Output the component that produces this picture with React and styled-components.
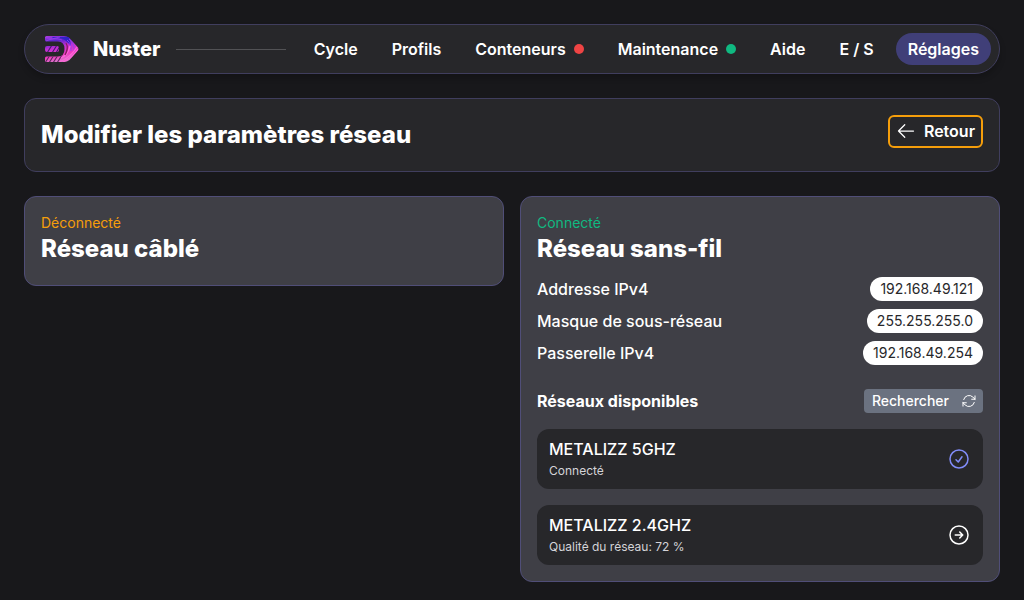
import React from "react";
import styled, { createGlobalStyle } from "styled-components";
import {
  HiOutlineArrowLeft,
  HiOutlineArrowPath,
  HiOutlineArrowRightCircle,
  HiOutlineCheckCircle,
} from "react-icons/hi2";

const GlobalStyle = createGlobalStyle`
  *, *::before, *::after { box-sizing: border-box; }
  body {
    margin: 0;
    background: #18181b;
    color: #ffffff;
    font-family: Inter, "Liberation Sans", sans-serif;
    font-size: 16px;
    line-height: 24px;
    font-optical-sizing: none;
  }
  h1, h2, h3, p, ul, dl, dd { margin: 0; padding: 0; }
  button { font: inherit; color: inherit; cursor: pointer; }
`;

const Page = styled.div`
  display: flex;
  flex-direction: column;
  gap: 24px;
  padding: 24px 24px 18px;
`;

const NavBar = styled.header`
  display: flex;
  align-items: center;
  gap: 16px;
  padding: 8px 8px 8px 20px;
  background: #27272a;
  border: 1px solid #403e5e;
  border-radius: 25px;
  box-shadow: 0 4px 6px rgba(0, 0, 0, 0.2);
`;

const Brand = styled.div`
  display: flex;
  align-items: center;
  gap: 14px;
  font-size: 20px;
  font-weight: 800;
`;

const Rule = styled.div`
  flex: 1;
  height: 1px;
  background: #525255;
`;

const NavLinks = styled.nav`
  display: flex;
  gap: 10px;
`;

const NavLink = styled.a`
  display: flex;
  align-items: center;
  gap: 8px;
  padding: 4px 12px;
  border-radius: 16px;
  background: ${(p) => (p.$active ? "#403f78" : "transparent")};
  color: #ffffff;
  font-weight: 600;
  text-decoration: none;
  white-space: nowrap;
`;

const Dot = styled.span`
  width: 10px;
  height: 10px;
  border-radius: 50%;
  background: ${(p) => p.$color};
`;

const TitleCard = styled.section`
  display: flex;
  align-items: flex-start;
  justify-content: space-between;
  padding: 16px;
  background: #27272a;
  border: 1px solid #403e5e;
  border-radius: 12px;
`;

const PageTitle = styled.h1`
  font-size: 24px;
  line-height: 40px;
  font-weight: 800;
`;

const BackButton = styled.button`
  display: flex;
  align-items: center;
  gap: 8px;
  padding: 2px 6px 3px;
  background: transparent;
  border: 2px solid #f59e0b;
  border-radius: 6px;
  font-weight: 600;
`;

const Columns = styled.main`
  display: grid;
  grid-template-columns: 1fr 1fr;
  align-items: start;
  gap: 16px;
`;

const Card = styled.section`
  padding: 16px;
  background: #3f3f46;
  border: 1px solid #504e78;
  border-radius: 12px;
`;

const Status = styled.p`
  color: ${(p) => p.$color};
  font-size: 14px;
  line-height: 20px;
`;

const CardTitle = styled.h2`
  margin-bottom: 4px;
  font-size: 24px;
  line-height: 32px;
  font-weight: 800;
`;

const Details = styled.dl`
  display: flex;
  flex-direction: column;
  gap: 8px;
  padding-top: 8px;
`;

const DetailRow = styled.div`
  display: flex;
  align-items: center;
  justify-content: space-between;
`;

const DetailLabel = styled.dt`
  font-weight: 500;
`;

const Pill = styled.dd`
  padding: 0 10px;
  background: #ffffff;
  border-radius: 12px;
  color: #27272a;
  font-size: 14px;
`;

const ListHeader = styled.div`
  display: flex;
  align-items: center;
  justify-content: space-between;
  margin-top: 24px;
`;

const ListTitle = styled.h3`
  font-size: 16px;
  font-weight: 700;
`;

const SearchButton = styled.button`
  display: flex;
  align-items: center;
  gap: 12px;
  height: 24px;
  padding: 0 6px 0 8px;
  background: #6b7280;
  border: 0;
  border-radius: 4px;
  font-size: 14px;
  font-weight: 500;
`;

const NetworkList = styled.ul`
  display: flex;
  flex-direction: column;
  gap: 16px;
  padding-top: 16px;
  list-style: none;
`;

const Network = styled.li`
  display: flex;
  align-items: center;
  justify-content: space-between;
  padding: 8px 12px;
  background: #27272a;
  border-radius: 12px;
`;

const NetworkName = styled.p`
  font-weight: 500;
`;

const NetworkInfo = styled.p`
  color: #d4d4d8;
  font-size: 12px;
  line-height: 20px;
`;

const IconButton = styled.button`
  display: flex;
  padding: 0;
  background: none;
  border: 0;
  color: ${(p) => p.$color};
`;

function Logo() {
  return (
    <svg width="34" height="26" viewBox="0 0 34 26" aria-hidden="true">
      <defs>
        <linearGradient id="body" x1="0" y1="0" x2="0.3" y2="1">
          <stop offset="0" stopColor="#b23be0" />
          <stop offset="0.25" stopColor="#5a24cc" />
          <stop offset="0.5" stopColor="#c030d4" />
          <stop offset="0.8" stopColor="#f03cc0" />
          <stop offset="1" stopColor="#d878c8" />
        </linearGradient>
        <clipPath id="shape">
          <path d="M1.500 0H19Q22 0 24.500 2L33 11.500Q34 13 33 14.500L24.500 24Q22 26 19 26H1.500Q0 26 0 24.500V22Q0 20.500 1.500 20.500H13Q19.500 20.500 19.500 13T13 5.500H1.500Q0 5.500 0 4V1.500Q0 0 1.500 0Z" />
          <rect x="0" y="10" width="14" height="6" rx="2" />
        </clipPath>
      </defs>
      <g clipPath="url(#shape)">
        <rect width="34" height="26" fill="url(#body)" />
        <path d="M6 3Q16 0 21 5T26 9L24 1H8Z" fill="#2f22c6" />
        <path d="M0 1.500Q8 4 15 1M1 5Q9 1 17 4" fill="none" stroke="#9a40ec" strokeWidth="0.8" />
        <path d="M22 4Q27 8 26 15M24 3Q30 8 29 16" fill="none" stroke="#8f44f4" strokeWidth="0.9" />
        <path d="M2 17L7 9M7 17L12 9M11 17L15 10" stroke="#42186e" strokeWidth="1.100" />
        <path d="M0 27L5 19M4 27L9 19M8 27L13 19M12 27L17 19" stroke="#5c285e" strokeWidth="1.100" />
        <path d="M14 26Q25 22 32 11M18 26Q27 22 33 13M16 22Q23 19 25 10" fill="none" stroke="#ff62d8" strokeWidth="1.300" />
        <path d="M21 7Q24 12 20 19" fill="none" stroke="#8a1c62" strokeWidth="1.300" />
      </g>
    </svg>
  );
}

const links = [
  { label: "Cycle" },
  { label: "Profils" },
  { label: "Conteneurs", dot: "#ef4444" },
  { label: "Maintenance", dot: "#10b981" },
  { label: "Aide" },
  { label: "E / S" },
  { label: "Réglages", active: true },
];

const details = [
  ["Addresse IPv4", "192.168.49.121"],
  ["Masque de sous-réseau", "255.255.255.0"],
  ["Passerelle IPv4", "192.168.49.254"],
];

const networks = [
  { name: "METALIZZ 5GHZ", info: "Connecté", connected: true },
  { name: "METALIZZ 2.4GHZ", info: "Qualité du réseau: 72 %", connected: false },
];

export default function App() {
  return (
    <>
      <GlobalStyle />
      <Page>
        <NavBar>
          <Brand>
            <Logo />
            Nuster
          </Brand>
          <Rule />
          <NavLinks>
            {links.map((l) => (
              <NavLink key={l.label} href="#" $active={l.active}>
                {l.label}
                {l.dot && <Dot $color={l.dot} />}
              </NavLink>
            ))}
          </NavLinks>
        </NavBar>

        <TitleCard>
          <PageTitle>Modifier les paramètres réseau</PageTitle>
          <BackButton type="button">
            <HiOutlineArrowLeft size={20} />
            Retour
          </BackButton>
        </TitleCard>

        <Columns>
          <Card>
            <Status $color="#f59e0b">Déconnecté</Status>
            <CardTitle>Réseau câblé</CardTitle>
          </Card>

          <Card>
            <Status $color="#10b981">Connecté</Status>
            <CardTitle>Réseau sans-fil</CardTitle>
            <Details>
              {details.map(([label, value]) => (
                <DetailRow key={label}>
                  <DetailLabel>{label}</DetailLabel>
                  <Pill>{value}</Pill>
                </DetailRow>
              ))}
            </Details>
            <ListHeader>
              <ListTitle>Réseaux disponibles</ListTitle>
              <SearchButton type="button">
                Rechercher
                <HiOutlineArrowPath size={16} />
              </SearchButton>
            </ListHeader>
            <NetworkList>
              {networks.map((n) => (
                <Network key={n.name}>
                  <div>
                    <NetworkName>{n.name}</NetworkName>
                    <NetworkInfo>{n.info}</NetworkInfo>
                  </div>
                  <IconButton
                    type="button"
                    aria-label={n.name}
                    $color={n.connected ? "#818cf8" : "#ffffff"}
                  >
                    {n.connected ? (
                      <HiOutlineCheckCircle size={24} />
                    ) : (
                      <HiOutlineArrowRightCircle size={24} />
                    )}
                  </IconButton>
                </Network>
              ))}
            </NetworkList>
          </Card>
        </Columns>
      </Page>
    </>
  );
}
